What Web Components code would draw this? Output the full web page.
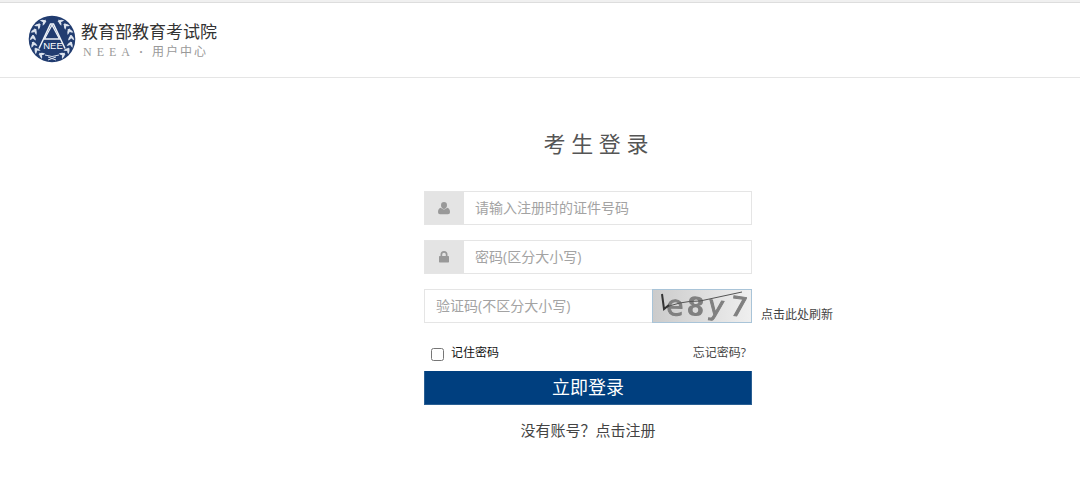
<!DOCTYPE html>
<html lang="zh-CN">
<head>
<meta charset="utf-8">
<meta name="viewport" content="width=device-width, initial-scale=1">
<title>考生登录</title>
<style>
  body { margin: 0; background: #fff; color: #444; font: 14px/20px "Open Sans", "Noto Sans CJK SC", sans-serif; }
</style>
</head>
<body>
<login-page></login-page>

<template id="brand-template">
  <style>
    :host { display: flex; align-items: center; gap: 5px; }
    svg { width: 48px; height: 48px; flex: none; }
    .text { padding-top: 5px; }
    .name { font-size: 17px; line-height: 20px; color: #333; }
    .sub { font: 12px/20px "Liberation Serif", "Noto Sans CJK SC", serif; color: #999; padding-left: 2px; display: flex; }
    .latin { letter-spacing: 5px; }
    .dot { padding: 0 9px 0 4px; font-weight: bold; }
    .han { letter-spacing: 2px; }
  </style>
  <svg viewBox="0 0 48 48" role="img" aria-label="NEEA">
    <defs><path id="leaf" d="M0-4.2Q2.6-1.8 0 2.6Q-2.3-1.5 0-4.2Z"/></defs>
    <circle cx="24" cy="24" r="23.3" fill="#213c70"/>
    <g id="leaves" fill="#dce3ee"></g>
    <circle cx="24" cy="24" r="15.4" fill="#213c70"/>
    <path d="M11 33.500L22.500 9H25.500L37 33.500" fill="none" stroke="#edf1f7" stroke-width="1.5"/>
    <path d="M24 10L16.500 24H31.500Z" fill="none" stroke="#edf1f7" stroke-width="1.3"/>
    <text x="25" y="33.500" text-anchor="middle" font-family="Liberation Sans, sans-serif" font-size="9.500" fill="#fff">NEE</text>
    <path d="M17 40Q24 43 31 40M20 45L28 42M20 42L28 45" fill="none" stroke="#dce3ee" stroke-width="1"/>
  </svg>
  <div class="text">
    <div class="name">教育部教育考试院</div>
    <div class="sub"><span class="latin">NEEA</span><span class="dot">·</span><span class="han">用户中心</span></div>
  </div>
</template>

<template id="field-template">
  <style>
    :host { display: flex; height: 34px; box-sizing: border-box; border: 1px solid #e5e5e5; background: #fff; }
    label { display: flex; align-items: center; justify-content: center; width: 38px; padding-right: 1px; flex: none; background: #e4e4e4; color: #999; }
    :host([plain]) label { display: none; }
    input { flex: 1; min-width: 0; border: 0; padding: 0 11px; margin: 0; outline: 0; background: none; font: inherit; color: #444; }
    input::placeholder { color: #a3a3a3; opacity: 1; }
  </style>
  <label for="box"><slot></slot></label>
  <input id="box">
</template>

<template id="captcha-template">
  <style>
    :host { display: block; width: 100px; height: 34px; flex: none; }
    button { display: block; width: 100%; height: 100%; padding: 0; border: 0; cursor: pointer; background: none; }
    svg { display: block; width: 100%; height: 100%; }
  </style>
  <button type="button" aria-label="刷新验证码">
    <svg viewBox="0 0 100 34">
      <defs>
        <linearGradient id="bg"><stop stop-color="#cbcbcb"/><stop offset="1" stop-color="#efefef"/></linearGradient>
        <filter id="soft"><feGaussianBlur stdDeviation=".7"/></filter>
      </defs>
      <rect x=".5" y=".5" width="99" height="33" fill="url(#bg)" stroke="#a9c4d8"/>
      <g font-family="DejaVu Sans, sans-serif" fill="#808080" stroke="#808080" filter="url(#soft)">
        <text font-size="28" transform="translate(14 26) rotate(2)">e</text>
        <text font-size="26" font-weight="bold" stroke="none" transform="translate(34 26) rotate(4)">8</text>
        <text font-size="27" transform="translate(55 25) rotate(8)">y</text>
        <text font-size="27" transform="translate(77 26) rotate(8)">7</text>
      </g>
      <path d="M11 20Q26 12 48 12L90 3" fill="none" stroke="#555" stroke-width="1"/>
      <path d="M10 5L12 20L17 16" fill="none" stroke="#333" stroke-width="2"/>
    </svg>
  </button>
</template>

<template id="form-template">
  <style>
    :host { display: block; width: 328px; }
    h1 { margin: 0 0 32px; padding-left: 16px; font-size: 22px; line-height: 32px; font-weight: 400; color: #555; text-align: center; }
    form { display: flex; flex-direction: column; gap: 15px; }
    a { color: #444; text-decoration: none; }
    .code { display: flex; }
    .code form-field { width: 228px; flex: none; border-right: 0; }
    .code a { flex: none; align-self: flex-end; padding-left: 9px; font-size: 12px; line-height: 16px; }
    .options { display: flex; align-items: center; justify-content: space-between; padding: 5px 6px 0; font-size: 12px; line-height: 20px; }
    .options label { display: flex; align-items: center; gap: 7px; color: #111; }
    .options input { width: 13px; height: 13px; margin: 3px 0 0 1px; }
    .submit { margin-top: -7px; height: 34px; padding: 0; border: 1px solid #2a5f93; border-width: 0 1px 1px; background: #003f7f; color: #fff; font: inherit; font-size: 18px; line-height: 33px; cursor: pointer; }
    p { margin: 0; font-size: 15px; line-height: 20px; text-align: center; }
  </style>
  <h1>考 生 登 录</h1>
  <form>
    <form-field name="account" placeholder="请输入注册时的证件号码">
      <svg width="12" height="13" viewBox="0 0 12 13" fill="currentColor"><path d="M6 0a3 3.300 0 0 1 3 3.300C9 5.200 7.800 7 6 7S3 5.200 3 3.300A3 3.300 0 0 1 6 0ZM2.800 5.800Q6 9 9.200 5.800Q12 6.400 12 10.200Q12 12.300 10 12.300H2Q0 12.300 0 10.200Q0 6.400 2.800 5.800Z"/></svg>
    </form-field>
    <form-field name="password" type="password" placeholder="密码(区分大小写)">
      <svg width="10" height="12" viewBox="0 0 10 12" fill="currentColor"><path fill-rule="evenodd" d="M1.500 5V3.500a3.500 3.500 0 0 1 7 0V5H9.300Q10 5 10 5.700V10.800Q10 11.500 9.300 11.500H.7Q0 11.500 0 10.800V5.700Q0 5 .7 5ZM3.200 5H6.800V3.500a1.800 1.800 0 0 0-3.600 0Z"/></svg>
    </form-field>
    <div class="code">
      <form-field plain name="code" placeholder="验证码(不区分大小写)"></form-field>
      <captcha-image></captcha-image>
      <a href="#refresh">点击此处刷新</a>
    </div>
    <div class="options">
      <label><input type="checkbox" name="remember">记住密码</label>
      <a href="#forgot">忘记密码?</a>
    </div>
    <button class="submit" type="submit">立即登录</button>
    <p>没有账号？<a href="#register">点击注册</a></p>
  </form>
</template>

<template id="page-template">
  <style>
    :host { display: block; }
    header { border-top: 2px solid #f0f0f0; border-bottom: 1px solid #e5e5e5; }
    .bar { border-top: 1px solid #ddd; padding: 12px 28px 14px; }
    main { display: flex; justify-content: center; padding: 49px 0 48px 96px; }
  </style>
  <header><div class="bar"><site-brand></site-brand></div></header>
  <main><login-form></login-form></main>
</template>

<script>
  class TemplateElement extends HTMLElement {
    constructor() {
      super();
      this.attachShadow({ mode: 'open' });
      this.shadowRoot.append(document.getElementById(this.constructor.template).content.cloneNode(true));
    }
  }

  class SiteBrand extends TemplateElement {
    static template = 'brand-template';
    connectedCallback() {
      // Two sprigs of leaves run up either side of the emblem.
      const leaves = [];
      for (const side of [-1, 1]) {
        for (let a = 28; a <= 150; a += 20) {
          for (const [radius, tilt] of [[20.6, -38], [17.6, 38]]) {
            leaves.push(`<use href="#leaf" transform="translate(24 24) rotate(${side * a}) translate(0 ${-radius}) rotate(${side * (-90 + tilt)})"/>`);
          }
        }
      }
      this.shadowRoot.getElementById('leaves').innerHTML = leaves.join('');
    }
  }

  class FormField extends TemplateElement {
    static template = 'field-template';
    connectedCallback() {
      const input = this.shadowRoot.querySelector('input');
      input.type = this.getAttribute('type') || 'text';
      input.name = this.getAttribute('name');
      input.placeholder = this.getAttribute('placeholder');
      input.setAttribute('aria-label', input.placeholder);
    }
  }

  class CaptchaImage extends TemplateElement { static template = 'captcha-template'; }
  class LoginForm extends TemplateElement { static template = 'form-template'; }
  class LoginPage extends TemplateElement { static template = 'page-template'; }

  customElements.define('site-brand', SiteBrand);
  customElements.define('form-field', FormField);
  customElements.define('captcha-image', CaptchaImage);
  customElements.define('login-form', LoginForm);
  customElements.define('login-page', LoginPage);
</script>
</body>
</html>
